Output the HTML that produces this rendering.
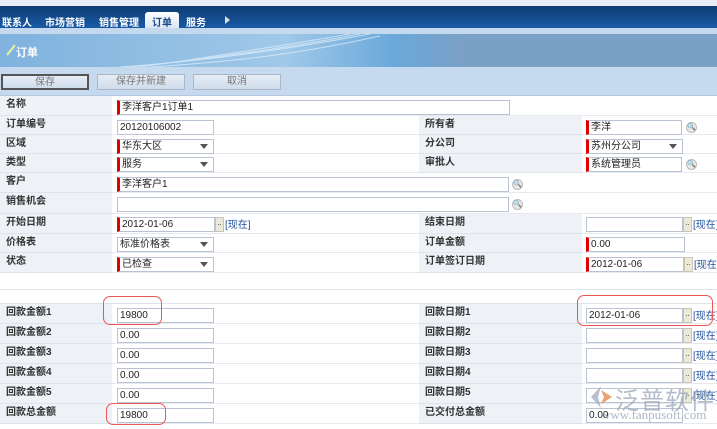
<!DOCTYPE html><html><head><meta charset="utf-8"><style>
*{margin:0;padding:0;box-sizing:border-box}
body{width:717px;height:429px;overflow:hidden;background:#fff;font-family:"Liberation Sans","Noto Sans CJK SC",sans-serif;font-size:10px;color:#222;position:relative}
.a{position:absolute;white-space:nowrap}
.lbl{position:absolute;background:#eef1f6;color:#333;font-weight:bold;padding:2px 0 0 6px;border-bottom:1px solid #dfe4ec;font-size:10px;line-height:14px}
.val{position:absolute;background:#fff;border-bottom:1px solid #e6e9ef}
.in{position:absolute;height:15px;border:1px solid #b9c3d1;background:#fff;font-size:10px;line-height:13px;padding-left:2px;white-space:nowrap}
.req{border-left:3px solid #e00000}
.sel:after{content:"";position:absolute;right:5px;top:4px;border:4px solid transparent;border-top:5px solid #555}
.dot{position:absolute;width:9px;height:15px;background:#ece9d8;border:1px solid #c9c5b5;font-size:8px;text-align:center;line-height:10px;color:#333}
.now{position:absolute;color:#1f4f9a;font-size:10px;white-space:nowrap;line-height:12px}
.mag{position:absolute;width:11px;height:11px;border-radius:50%;background:#e8e8e8;border:1px solid #bbb;font-size:7px;text-align:center;line-height:9px}
.btn{position:absolute;top:74px;height:16px;border:1px solid #a9b7c9;background:linear-gradient(#e6edf6,#cfdceb);color:#777;text-align:center;line-height:14px;font-size:10px}
.oval{position:absolute;border:1px solid #e55;border-radius:7px}
</style></head><body>
<div class="a" style="left:0;top:0;width:717px;height:6px;background:#e9eef5"></div>
<div class="a" style="left:0;top:6px;width:717px;height:22px;background:linear-gradient(#0d3c73,#1a5aa6)"></div>
<div class="a" style="left:2px;top:14px;color:#fff;font-weight:bold">联系人</div>
<div class="a" style="left:45px;top:14px;color:#fff;font-weight:bold">市场营销</div>
<div class="a" style="left:99px;top:14px;color:#fff;font-weight:bold">销售管理</div>
<div class="a" style="left:145px;top:12px;width:34px;height:16px;background:linear-gradient(#fff,#dbe6f3);border-radius:3px 3px 0 0"></div>
<div class="a" style="left:152px;top:14px;color:#1a4a87;font-weight:bold">订单</div>
<div class="a" style="left:186px;top:14px;color:#fff;font-weight:bold">服务</div>
<div class="a" style="left:225px;top:16px;border:4px solid transparent;border-left:5px solid #ddd"></div>
<div class="a" style="left:0;top:28px;width:717px;height:6px;background:#c4d8ee"></div>
<div class="a" style="left:0;top:34px;width:717px;height:33px;background:linear-gradient(90deg,#7fb2de,#a0c8e8 40%,#6aa8da 55%,#7ba0c6 65%,#7ba0c6)"></div>
<svg class="a" style="left:110px;top:34px" width="280" height="33"><g fill="none" stroke="#e6f1fb" stroke-width="1" opacity=".7"><path d="M10 33 C80 28 150 20 260 0"/><path d="M20 33 C100 25 170 15 250 0"/><path d="M30 33 C110 22 180 10 240 0"/><path d="M40 33 C120 28 190 20 270 2"/></g></svg>
<svg class="a" style="left:6px;top:44px" width="10" height="12"><path d="M1 11 L9 1" stroke="#e8f0a0" stroke-width="2"/></svg>
<div class="a" style="left:16px;top:44px;color:#fff;font-weight:bold;font-size:11px">订单</div>
<div class="a" style="left:0;top:67px;width:717px;height:29px;background:#c5d9ef;border-bottom:1px solid #b5c7dd"></div>
<div class="btn" style="left:1px;width:88px;border:2px solid #555">保存</div>
<div class="btn" style="left:97px;width:88px">保存并新建</div>
<div class="btn" style="left:193px;width:88px">取消</div>

<div class="lbl" style="left:0;top:96px;width:112px;height:20px">名称</div><div class="val" style="left:112px;top:96px;width:605px;height:20px"></div>
<div class="in req" style="left:117px;top:100px;width:393px">李洋客户1订单1</div>

<div class="lbl" style="left:0;top:116px;width:112px;height:19px">订单编号</div><div class="val" style="left:112px;top:116px;width:307px;height:19px"></div>
<div class="lbl" style="left:419px;top:116px;width:163px;height:19px">所有者</div><div class="val" style="left:582px;top:116px;width:135px;height:19px"></div>
<div class="in" style="left:117px;top:120px;width:97px">20120106002</div>
<div class="in req" style="left:586px;top:120px;width:96px">李洋</div><div class="mag" style="left:686px;top:122px">🔍</div>

<div class="lbl" style="left:0;top:135px;width:112px;height:19px">区域</div><div class="val" style="left:112px;top:135px;width:307px;height:19px"></div>
<div class="lbl" style="left:419px;top:135px;width:163px;height:19px">分公司</div><div class="val" style="left:582px;top:135px;width:135px;height:19px"></div>
<div class="in req sel" style="left:117px;top:139px;width:97px">华东大区</div>
<div class="in req sel" style="left:586px;top:139px;width:97px">苏州分公司</div>

<div class="lbl" style="left:0;top:154px;width:112px;height:19px">类型</div><div class="val" style="left:112px;top:154px;width:307px;height:19px"></div>
<div class="lbl" style="left:419px;top:154px;width:163px;height:19px">审批人</div><div class="val" style="left:582px;top:154px;width:135px;height:19px"></div>
<div class="in req sel" style="left:117px;top:157px;width:97px">服务</div>
<div class="in req" style="left:586px;top:157px;width:96px">系统管理员</div><div class="mag" style="left:686px;top:159px">🔍</div>

<div class="lbl" style="left:0;top:173px;width:112px;height:20px">客户</div><div class="val" style="left:112px;top:173px;width:605px;height:20px"></div>
<div class="in req" style="left:117px;top:177px;width:392px">李洋客户1</div><div class="mag" style="left:512px;top:179px">🔍</div>

<div class="lbl" style="left:0;top:193px;width:112px;height:21px">销售机会</div><div class="val" style="left:112px;top:193px;width:605px;height:21px"></div>
<div class="in" style="left:117px;top:197px;width:392px"></div><div class="mag" style="left:512px;top:199px">🔍</div>

<div class="lbl" style="left:0;top:214px;width:112px;height:20px">开始日期</div><div class="val" style="left:112px;top:214px;width:307px;height:20px"></div>
<div class="lbl" style="left:419px;top:214px;width:163px;height:20px">结束日期</div><div class="val" style="left:582px;top:214px;width:135px;height:20px"></div>
<div class="in req" style="left:117px;top:217px;width:98px">2012-01-06</div><div class="dot" style="left:215px;top:217px">..</div><div class="now" style="left:225px;top:220px">[现在]</div>
<div class="in" style="left:586px;top:217px;width:97px"></div><div class="dot" style="left:683px;top:217px">..</div><div class="now" style="left:693px;top:220px">[现在]</div>

<div class="lbl" style="left:0;top:234px;width:112px;height:19px">价格表</div><div class="val" style="left:112px;top:234px;width:307px;height:19px"></div>
<div class="lbl" style="left:419px;top:234px;width:163px;height:19px">订单金额</div><div class="val" style="left:582px;top:234px;width:135px;height:19px"></div>
<div class="in sel" style="left:117px;top:237px;width:97px">标准价格表</div>
<div class="in req" style="left:586px;top:237px;width:99px">0.00</div>

<div class="lbl" style="left:0;top:253px;width:112px;height:20px">状态</div><div class="val" style="left:112px;top:253px;width:307px;height:20px"></div>
<div class="lbl" style="left:419px;top:253px;width:163px;height:20px">订单签订日期</div><div class="val" style="left:582px;top:253px;width:135px;height:20px"></div>
<div class="in req sel" style="left:117px;top:257px;width:97px">已检查</div>
<div class="in req" style="left:586px;top:257px;width:98px">2012-01-06</div><div class="dot" style="left:684px;top:257px">..</div><div class="now" style="left:694px;top:260px">[现在]</div>

<div class="a" style="left:0;top:273px;width:717px;height:17px;border-bottom:1px solid #dfe4ec"></div>
<div class="a" style="left:0;top:290px;width:717px;height:14px;border-bottom:1px solid #dfe4ec"></div>

<div class="lbl" style="left:0;top:304px;width:112px;height:20px">回款金额1</div><div class="val" style="left:112px;top:304px;width:307px;height:20px"></div>
<div class="lbl" style="left:419px;top:304px;width:163px;height:20px">回款日期1</div><div class="val" style="left:582px;top:304px;width:135px;height:20px"></div>
<div class="in" style="left:117px;top:308px;width:97px">19800</div>
<div class="in" style="left:586px;top:308px;width:97px">2012-01-06</div><div class="dot" style="left:683px;top:308px">..</div><div class="now" style="left:693px;top:311px">[现在]</div>

<div class="lbl" style="left:0;top:324px;width:112px;height:20px">回款金额2</div><div class="val" style="left:112px;top:324px;width:307px;height:20px"></div>
<div class="lbl" style="left:419px;top:324px;width:163px;height:20px">回款日期2</div><div class="val" style="left:582px;top:324px;width:135px;height:20px"></div>
<div class="in" style="left:117px;top:328px;width:97px">0.00</div>
<div class="in" style="left:586px;top:328px;width:97px"></div><div class="dot" style="left:683px;top:328px">..</div><div class="now" style="left:693px;top:331px">[现在]</div>

<div class="lbl" style="left:0;top:344px;width:112px;height:20px">回款金额3</div><div class="val" style="left:112px;top:344px;width:307px;height:20px"></div>
<div class="lbl" style="left:419px;top:344px;width:163px;height:20px">回款日期3</div><div class="val" style="left:582px;top:344px;width:135px;height:20px"></div>
<div class="in" style="left:117px;top:348px;width:97px">0.00</div>
<div class="in" style="left:586px;top:348px;width:97px"></div><div class="dot" style="left:683px;top:348px">..</div><div class="now" style="left:693px;top:351px">[现在]</div>

<div class="lbl" style="left:0;top:364px;width:112px;height:20px">回款金额4</div><div class="val" style="left:112px;top:364px;width:307px;height:20px"></div>
<div class="lbl" style="left:419px;top:364px;width:163px;height:20px">回款日期4</div><div class="val" style="left:582px;top:364px;width:135px;height:20px"></div>
<div class="in" style="left:117px;top:368px;width:97px">0.00</div>
<div class="in" style="left:586px;top:368px;width:97px"></div><div class="dot" style="left:683px;top:368px">..</div><div class="now" style="left:693px;top:371px">[现在]</div>

<div class="lbl" style="left:0;top:384px;width:112px;height:20px">回款金额5</div><div class="val" style="left:112px;top:384px;width:307px;height:20px"></div>
<div class="lbl" style="left:419px;top:384px;width:163px;height:20px">回款日期5</div><div class="val" style="left:582px;top:384px;width:135px;height:20px"></div>
<div class="in" style="left:117px;top:388px;width:97px">0.00</div>
<div class="in" style="left:586px;top:388px;width:97px"></div><div class="dot" style="left:683px;top:388px">..</div><div class="now" style="left:693px;top:391px">[现在]</div>

<div class="lbl" style="left:0;top:404px;width:112px;height:20px">回款总金额</div><div class="val" style="left:112px;top:404px;width:307px;height:20px"></div>
<div class="lbl" style="left:419px;top:404px;width:163px;height:20px">已交付总金额</div><div class="val" style="left:582px;top:404px;width:135px;height:20px"></div>
<div class="in" style="left:117px;top:408px;width:97px">19800</div>
<div class="in" style="left:586px;top:408px;width:97px">0.00</div>

<div class="oval" style="left:103px;top:296px;width:59px;height:29px"></div>
<div class="oval" style="left:106px;top:403px;width:60px;height:22px"></div>
<div class="oval" style="left:577px;top:295px;width:136px;height:31px"></div>

<svg class="a" style="left:588px;top:384px" width="26" height="26"><path d="M13 2 L3 13 L13 24 L10 13 Z" fill="#9aa7b8" opacity=".7"/><path d="M13 6 L24 13 L13 20 L16 13Z" fill="#e07a3a" opacity=".7"/></svg>
<div class="a" style="left:615px;top:381px;font-size:24px;color:#9aa7b8;opacity:.75;letter-spacing:1px">泛普软件</div>
<div class="a" style="left:601px;top:407px;font-size:13px;color:#9aa7b8;opacity:.8;font-family:'Liberation Serif',serif">www.fanpusoft.com</div>
</body></html>
